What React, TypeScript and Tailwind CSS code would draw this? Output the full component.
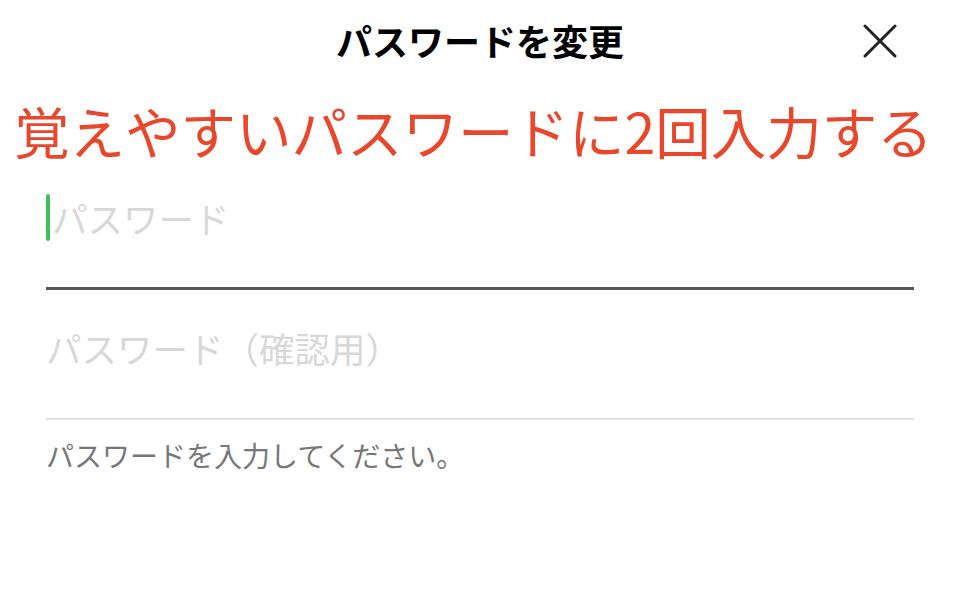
const font = { fontFamily: '"Noto Sans CJK JP", "Noto Sans", sans-serif' };

export default function App() {
  return (
    <div className="h-[604px] w-[960px] bg-white" style={font}>
      <header className="relative flex h-[80px] items-center justify-center">
        <h1 className="text-[36px] font-bold text-black">パスワードを変更</h1>
        <button className="absolute left-[863px] top-[24px] text-[#222]">
          <svg width="34" height="34" viewBox="0 0 34 34" fill="none" stroke="currentColor" strokeWidth="3" strokeLinecap="round">
            <line x1="2" y1="2" x2="32" y2="32" />
            <line x1="32" y1="2" x2="2" y2="32" />
          </svg>
        </button>
      </header>

      <p className="pl-[14px] text-[55.5px] leading-[100px] text-[#e8472b]">
        覚えやすいパスワードに2回入力する
      </p>

      <div className="px-[46px]">
        <div className="flex h-[110px] items-start border-b-[3px] border-[#555] pt-[14px]">
          <span className="mr-[2px] h-[47px] w-[4px] rounded-full bg-[#3cc15c]" />
          <span className="text-[35.5px] leading-[48px] text-[#d8d8d8]">パスワード</span>
        </div>
        <div className="flex h-[130px] items-start border-b-2 border-[#e2e2e2] pt-[34px]">
          <span className="text-[35.5px] leading-[48px] text-[#d8d8d8]">パスワード（確認用）</span>
        </div>
        <p className="pt-[15px] text-[28px] leading-[40px] text-[#777]">
          パスワードを入力してください。
        </p>
      </div>
    </div>
  );
}
